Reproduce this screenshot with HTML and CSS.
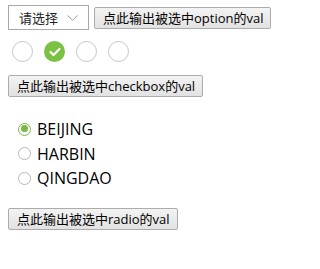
FILE: index.html
```html
<!DOCTYPE html>
<html lang="zh-CN">
<head>
<meta charset="utf-8">
<title>表单取值</title>
<link rel="stylesheet" href="styles.css">
</head>
<body>
  <div class="row row-select">
    <div class="select">
      <span class="select-text">请选择</span>
      <svg class="chevron" width="11" height="6" viewBox="0 0 11 6"><path d="M0.5 0.5 L5.5 5.2 L10.5 0.5" fill="none" stroke="#9a9a9a" stroke-width="1"/></svg>
    </div>
    <button class="btn">点此输出被选中option的val</button>
  </div>

  <div class="row checks">
    <span class="check"></span>
    <span class="check checked">
      <svg width="21" height="21" viewBox="0 0 21 21"><path d="M6.5 11 L9.5 14 L15.5 8" fill="none" stroke="#fff" stroke-width="2.2" stroke-linecap="round" stroke-linejoin="round"/></svg>
    </span>
    <span class="check"></span>
    <span class="check"></span>
  </div>

  <div class="row">
    <button class="btn">点此输出被选中checkbox的val</button>
  </div>

  <div class="radios">
    <label class="radio-row"><span class="radio on"></span><span class="radio-label">BEIJING</span></label>
    <label class="radio-row"><span class="radio"></span><span class="radio-label">HARBIN</span></label>
    <label class="radio-row"><span class="radio"></span><span class="radio-label">QINGDAO</span></label>
  </div>

  <div class="row">
    <button class="btn">点此输出被选中radio的val</button>
  </div>
</body>
</html>
```

FILE: styles.css
```css
html, body {
  background: #fff;
}
body {
  margin: 0;
  padding: 5px 8px 0;
  font-family: "Open Sans", "Noto Sans CJK SC", sans-serif;
  color: #000;
}
.row {
  display: flex;
  align-items: center;
}
.row-select {
  gap: 5px;
}
.select {
  box-sizing: border-box;
  width: 81px;
  height: 25px;
  border: 1px solid #a9a9a9;
  display: flex;
  align-items: center;
  padding-left: 10px;
  gap: 9px;
  font-size: 13px;
  font-family: "Noto Sans CJK SC", sans-serif;
  color: #222;
}
.chevron {
  display: block;
  margin-top: 1px;
}
.btn {
  box-sizing: border-box;
  height: 22px;
  padding: 0 7px 0 8px;
  border: 1px solid #acacac;
  border-radius: 2px;
  background: linear-gradient(#f3f3f3, #e2e2e2);
  font-family: "Open Sans", "Noto Sans CJK SC", sans-serif;
  font-size: 13px;
  line-height: 18px;
  color: #000;
  white-space: nowrap;
}
.checks {
  margin-top: 11px;
  padding-left: 4px;
  gap: 11px;
}
.check {
  box-sizing: border-box;
  width: 21px;
  height: 21px;
  border-radius: 50%;
  border: 1.5px solid #c4c4d0;
  display: block;
}
.check.checked {
  border: none;
  background: #7bc144;
}
.check.checked svg {
  display: block;
}
.checks + .row {
  margin-top: 13px;
}
.radios {
  margin-top: 20px;
  padding-left: 10px;
  display: flex;
  flex-direction: column;
}
.radio-row {
  display: flex;
  align-items: center;
  height: 24.5px;
  gap: 6px;
  font-size: 16px;
}
.radio {
  box-sizing: border-box;
  width: 13px;
  height: 13px;
  border-radius: 50%;
  border: 1px solid #b8b8b8;
  display: block;
  position: relative;
}
.radio.on {
  border: 1.5px solid #7cb744;
}
.radio.on::after {
  content: "";
  position: absolute;
  left: 1.5px;
  top: 1.5px;
  width: 7px;
  height: 7px;
  border-radius: 50%;
  background: #7cb744;
}
.radio-label {
  line-height: 20px;
}
.radios + .row {
  margin-top: 17px;
}
```
